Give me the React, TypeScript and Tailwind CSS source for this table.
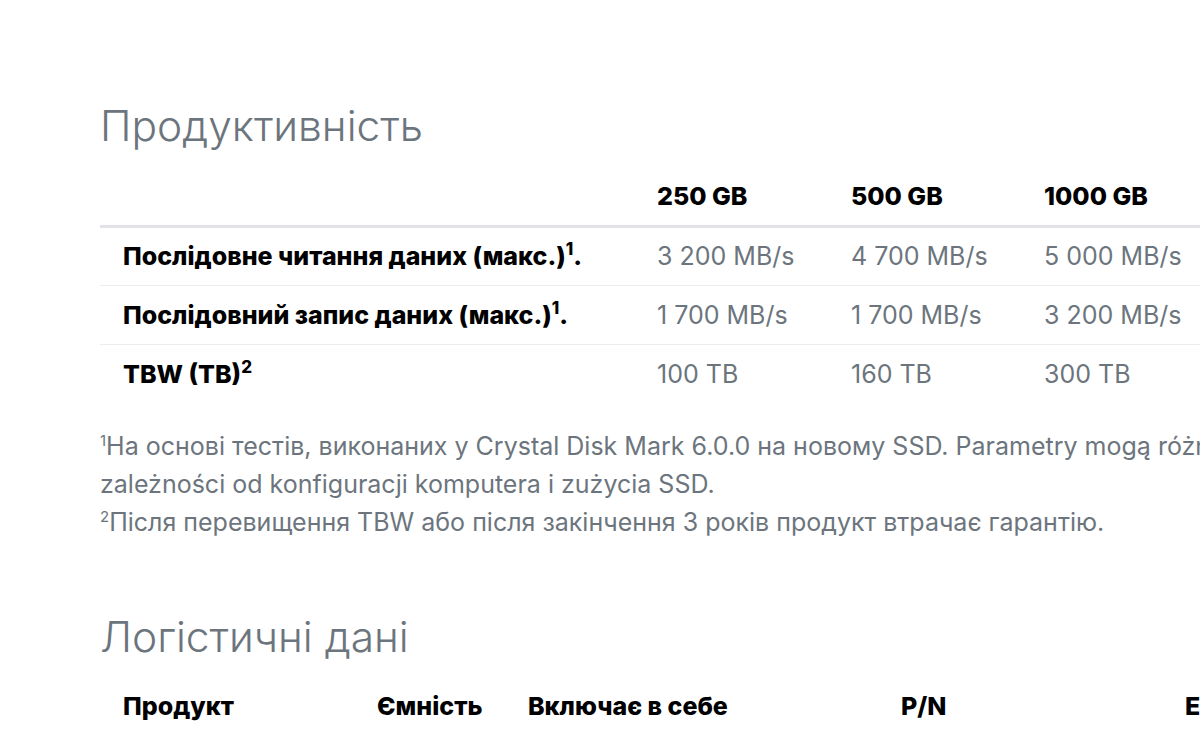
import React, { type ReactElement } from "react";

const perf = [
  { label: "Послідовне читання даних (макс.)", sup: "1", dot: true, values: ["3 200 MB/s", "4 700 MB/s", "5 000 MB/s"] },
  { label: "Послідовний запис даних (макс.)", sup: "1", dot: true, values: ["1 700 MB/s", "1 700 MB/s", "3 200 MB/s"] },
  { label: "TBW (TB)", sup: "2", dot: false, values: ["100 TB", "160 TB", "300 TB"] },
];

const App = (): ReactElement => {
  return (
    <div
      className="w-[1200px] h-[731px] overflow-hidden bg-white"
      style={{ fontFamily: "Inter, 'Noto Sans', sans-serif" }}
    >
      <div className="pl-[100px] pt-[100px] w-[1400px]">
        <h2 className="text-[42.5px] leading-[52px] font-light text-[#6c757d]">Продуктивність</h2>

        <table className="table-fixed border-collapse mt-[16px] w-[1300px] text-[25px]">
          <colgroup>
            <col className="w-[557px]" />
            <col className="w-[194px]" />
            <col className="w-[193px]" />
            <col className="w-[356px]" />
          </colgroup>
          <thead>
            <tr className="border-b-[3px] border-[#e2e3e9]">
              <th className="h-[58px]" />
              <th className="text-left font-extrabold text-black">250 GB</th>
              <th className="text-left font-extrabold text-black">500 GB</th>
              <th className="text-left font-extrabold text-black">1000 GB</th>
            </tr>
          </thead>
          <tbody>
            {perf.map((row, i) => (
              <tr key={row.label} className={i < perf.length - 1 ? "border-b border-[#ececec]" : ""}>
                <td className="h-[59px] pt-[2px] pl-[23px] font-extrabold text-black whitespace-nowrap">
                  {row.label}
                  <span className="relative -top-[10px] text-[17px] leading-[0] font-extrabold">{row.sup}</span>
                  {row.dot ? "." : ""}
                </td>
                {row.values.map((v) => (
                  <td key={v} className="pt-[2px] text-[#6c757d] whitespace-nowrap">
                    {v}
                  </td>
                ))}
              </tr>
            ))}
          </tbody>
        </table>

        <div className="mt-[24px] text-[25px] leading-[38px] text-[#6c757d] w-[1330px]">
          <p>
            <span className="relative -top-[9px] text-[15px] leading-[0]">1</span>На основі тестів, виконаних у Crystal Disk Mark 6.0.0 на новому SSD. Parametry mogą różnić się w
            zależności od konfiguracji komputera i zużycia SSD.
          </p>
          <p>
            <span className="relative -top-[9px] text-[15px] leading-[0]">2</span>Після перевищення TBW або після закінчення 3 років продукт втрачає гарантію.
          </p>
        </div>

        <h2 className="mt-[70px] text-[42.5px] leading-[52px] font-light text-[#6c757d]">Логістичні дані</h2>

        <table className="table-fixed border-collapse mt-[16px] w-[1300px] text-[25px]">
          <colgroup>
            <col className="w-[277px]" />
            <col className="w-[151px]" />
            <col className="w-[373px]" />
            <col className="w-[284px]" />
            <col className="w-[215px]" />
          </colgroup>
          <thead>
            <tr>
              <th className="h-[56px] pl-[23px] text-left font-extrabold text-black">Продукт</th>
              <th className="text-left font-extrabold text-black">Ємність</th>
              <th className="text-left font-extrabold text-black">Включає в себе</th>
              <th className="text-left font-extrabold text-black">P/N</th>
              <th className="text-left font-extrabold text-black">EAN</th>
            </tr>
          </thead>
        </table>
      </div>
    </div>
  );
};

export default App;
